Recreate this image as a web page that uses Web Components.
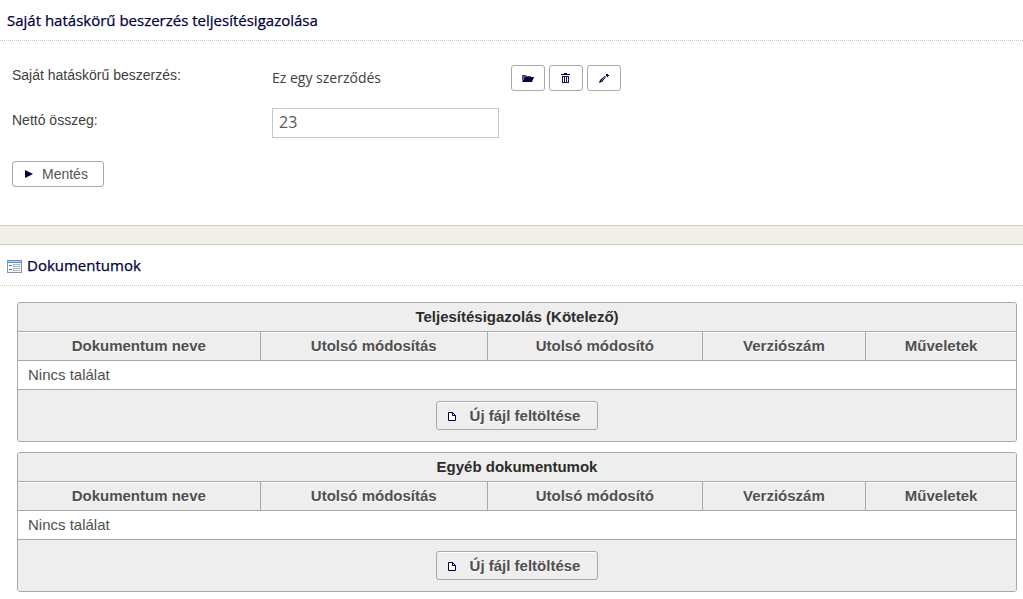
<!DOCTYPE html>
<html lang="hu">
<head>
<meta charset="utf-8">
<meta name="viewport" content="width=device-width, initial-scale=1">
<title>Saját hatáskörű beszerzés teljesítésigazolása</title>
<style>
  body { margin: 0; background: #fff; color: #3e3e3e; font: 14px/18px "Liberation Sans", Arial, sans-serif; }
</style>
</head>
<body>
<procurement-page></procurement-page>

<template id="page-tpl">
  <style>
    :host { display: block; }
    .divider { height: 18px; background: #f3eee7; border: solid #ccc; border-width: 1px 0; }
    .tables { display: flex; flex-direction: column; gap: 10px; padding: 16px 6px 7px 17px; }
  </style>
  <main>
    <panel-section>
      <span slot="title">Saját hatáskörű beszerzés teljesítésigazolása</span>
      <certificate-form></certificate-form>
    </panel-section>
    <div class="divider"></div>
    <panel-section>
      <svg slot="icon" width="15" height="16" viewBox="0 -3 15 16" aria-hidden="true" shape-rendering="crispEdges">
        <rect x="0" y="0" width="15" height="13" fill="#7a95ba"/>
        <rect x="1" y="3" width="13" height="9" fill="#f7f9fc"/>
        <rect x="1" y="0" width="13" height="3" fill="#5f97dd"/>
        <rect x="1" y="1" width="13" height="1" fill="#a9cbf5"/>
        <path fill="#4f81c8" d="M2 5h3v1H2zM2 9h3v1H2z"/>
        <path fill="#b4b8bd" d="M6 4h7v1H6zM6 5h1v2H6zM12 5h1v1h-1zM6 6h7v1H6zM6 8h7v1H6zM6 9h1v2H6zM6 10h7v1H6z"/>
      </svg>
      <span slot="title">Dokumentumok</span>
      <div class="tables">
        <document-table>Teljesítésigazolás (Kötelező)</document-table>
        <document-table>Egyéb dokumentumok</document-table>
      </div>
    </panel-section>
  </main>
</template>

<template id="section-tpl">
  <style>
    :host { display: block; }
    h2 {
      display: flex; align-items: center; gap: 5px;
      margin: 0; padding: 10px 7px; border-bottom: 1px dotted #c8c8c8;
      font: 400 15px/20px "Open Sans", sans-serif; color: #00003c;
      -webkit-text-stroke: 0.25px #00003c;
    }
  </style>
  <section>
    <h2><slot name="icon"></slot><slot name="title"></slot></h2>
    <slot></slot>
  </section>
</template>

<template id="form-tpl">
  <style>
    :host { display: block; }
    form { padding: 24px 12px 38px; }
    .row { display: grid; grid-template-columns: 260px 227px 1fr; align-items: start; }
    .row + .row { margin-top: 17px; }
    label { padding-top: 3px; }
    .name { padding-top: 1px; }
    output { padding-top: 4px; font-family: "Open Sans", sans-serif; }
    .tools { display: flex; gap: 4px; padding-left: 12px; }
    input {
      box-sizing: border-box; width: 100%; height: 30px; margin: 0; padding: 0 6px 2px;
      border: 1px solid #c6c6c6; border-radius: 0; background: #fff;
      color: #5a5a5a; font: 16px/20px "Open Sans", sans-serif;
    }
    .submit { margin-top: 23px; }
  </style>
  <form>
    <div class="row">
      <label class="name" for="procurement">Saját hatáskörű beszerzés:</label>
      <output id="procurement">Ez egy szerződés</output>
      <div class="tools">
        <icon-button icon="folder" label="Megnyitás"></icon-button>
        <icon-button icon="trash" label="Törlés"></icon-button>
        <icon-button icon="pencil" label="Szerkesztés"></icon-button>
      </div>
    </div>
    <div class="row">
      <label for="amount">Nettó összeg:</label>
      <input id="amount" type="text" value="23">
    </div>
    <div class="submit"><icon-button icon="play">Mentés</icon-button></div>
  </form>
</template>

<template id="button-tpl">
  <style>
    :host { display: inline-block; vertical-align: top; }
    button {
      display: flex; align-items: center; justify-content: center; gap: 7px;
      box-sizing: border-box; min-width: 34px; height: 26px; margin: 0; padding: 0 10px;
      border: 1px solid #a8a8a8; border-radius: 3px; background: #fff;
      color: #555; font: inherit; cursor: pointer;
    }
    :host([icon="play"]) button { padding: 0 15px 0 10px; }
    :host([large]) button {
      height: 29px; padding: 0 17px 0 10px; gap: 11px; background: #eee; color: #4f4f4f;
      box-shadow: inset 0 1px 0 #fff; text-shadow: 0 1px 0 #fff;
    }
    svg { display: block; flex: none; }
  </style>
  <button type="button"><svg width="12" height="12" viewBox="0 0 12 12" aria-hidden="true" fill="#00003c"></svg><slot></slot></button>
</template>

<template id="table-tpl">
  <style>
    :host { display: block; }
    table {
      width: 100%; table-layout: fixed; border-collapse: separate; border-spacing: 0;
      border: 1px solid #a8a8a8; border-radius: 3px; overflow: hidden;
      font-size: 15px; line-height: 18px; color: #4f4f4f;
    }
    th, td { padding: 5px 10px; border-bottom: 1px solid #a8a8a8; }
    th { background: #eee; text-align: center; font-weight: 700; }
    .title { color: #2c2c2c; }
    .columns th { box-shadow: inset 0 1px 0 #fff; text-shadow: 0 1px 0 #fff; }
    .columns th + th { border-left: 1px solid #a8a8a8; }
    tfoot td { padding: 11px 10px; border-bottom: 0; background: #eee; text-align: center; font-weight: 700; }
    .c1 { width: 24.2%; } .c2 { width: 22.8%; } .c3 { width: 21.5%; } .c4 { width: 16.4%; }
  </style>
  <table>
    <colgroup><col class="c1"><col class="c2"><col class="c3"><col class="c4"><col></colgroup>
    <thead>
      <tr><th class="title" colspan="5" scope="colgroup"><slot></slot></th></tr>
      <tr class="columns">
        <th scope="col">Dokumentum neve</th>
        <th scope="col">Utolsó módosítás</th>
        <th scope="col">Utolsó módosító</th>
        <th scope="col">Verziószám</th>
        <th scope="col">Műveletek</th>
      </tr>
    </thead>
    <tbody><tr><td colspan="5">Nincs találat</td></tr></tbody>
    <tfoot><tr><td colspan="5"><icon-button icon="file" large>Új fájl feltöltése</icon-button></td></tr></tfoot>
  </table>
</template>

<script>
  const ICONS = {
    folder: '<path d="M0 3h4l1 1h4v1H3L0 9z" opacity=".7"/><path d="M3 5h9l-2 5H0z"/>',
    trash: '<path d="M4 1h3v1h3v1H1V2h3z"/><path fill-rule="evenodd" d="M2 4h7v7H2zM3 5v5h1V5zM5 5v5h1V5zM7 5v5h1V5z" opacity=".9"/>',
    pencil: '<path d="M1 11l1-3 5-4 1 1-4 5z"/><path d="M3 9l4-4" stroke="#fff" stroke-width=".5"/><path d="M8 2h2v1h1v1h-1v1H9V4H8z"/>',
    play: '<path d="M2 2l8 4-8 4z"/>',
    file: '<path d="M1.500 2.500h4l3 3v5h-7z" fill="#fff" stroke="#00003c"/><path d="M5.500 2.500v3h3" fill="none" stroke="#00003c"/>'
  };

  class TemplateElement extends HTMLElement {
    constructor() {
      super();
      const tpl = document.getElementById(this.constructor.template);
      this.attachShadow({ mode: 'open' }).append(tpl.content.cloneNode(true));
    }
  }

  customElements.define('icon-button', class extends TemplateElement {
    static template = 'button-tpl';
    connectedCallback() {
      this.shadowRoot.querySelector('svg').innerHTML = ICONS[this.getAttribute('icon')] || '';
      const label = this.getAttribute('label');
      if (label) {
        this.shadowRoot.querySelector('slot').remove();
        this.shadowRoot.querySelector('button').setAttribute('aria-label', label);
      }
    }
  });
  customElements.define('document-table', class extends TemplateElement { static template = 'table-tpl'; });
  customElements.define('certificate-form', class extends TemplateElement { static template = 'form-tpl'; });
  customElements.define('panel-section', class extends TemplateElement { static template = 'section-tpl'; });
  customElements.define('procurement-page', class extends TemplateElement { static template = 'page-tpl'; });
</script>
</body>
</html>
